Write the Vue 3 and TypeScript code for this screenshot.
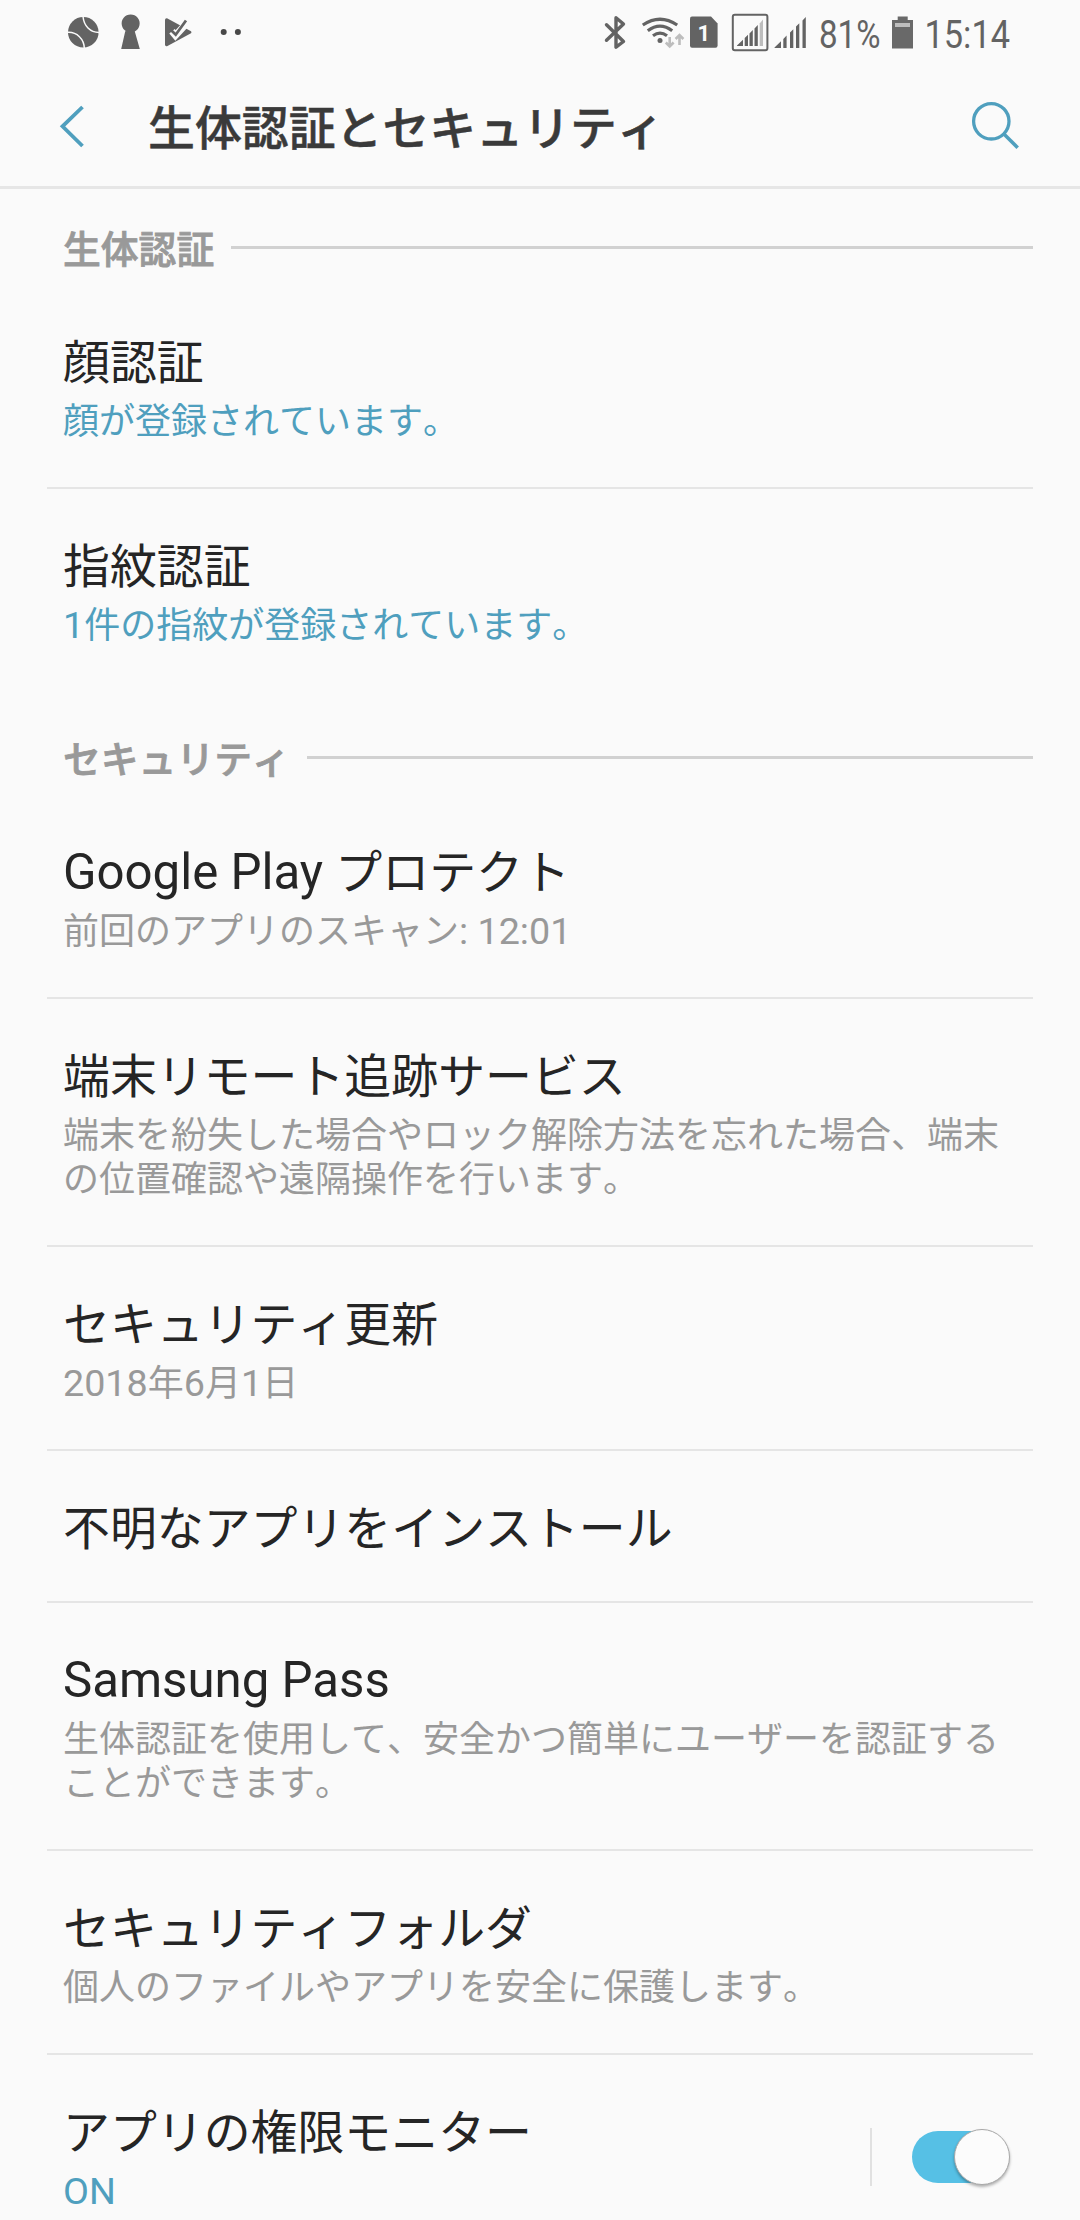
<script setup lang="ts">
interface Item {
  title: string
  summary?: string
  active?: boolean
  toggle?: boolean
}
interface Section {
  label: string
  items: Item[]
}
interface Run {
  text: string
  latin: boolean
}

const heading = '生体認証とセキュリティ'

const sections: Section[] = [
  {
    label: '生体認証',
    items: [
      { title: '顔認証', summary: '顔が登録されています。', active: true },
      { title: '指紋認証', summary: '1件の指紋が登録されています。', active: true },
    ],
  },
  {
    label: 'セキュリティ',
    items: [
      { title: 'Google Play プロテクト', summary: '前回のアプリのスキャン: 12:01' },
      {
        title: '端末リモート追跡サービス',
        summary: '端末を紛失した場合やロック解除方法を忘れた場合、端末の位置確認や遠隔操作を行います。',
      },
      { title: 'セキュリティ更新', summary: '2018年6月1日' },
      { title: '不明なアプリをインストール' },
      {
        title: 'Samsung Pass',
        summary: '生体認証を使用して、安全かつ簡単にユーザーを認証することができます。',
      },
      { title: 'セキュリティフォルダ', summary: '個人のファイルやアプリを安全に保護します。' },
      { title: 'アプリの権限モニター', summary: 'ON', active: true, toggle: true },
    ],
  },
]

// Latin and Japanese runs are set at different sizes on a shared baseline.
function runs(text: string): Run[] {
  return (text.match(/[\x20-\x7e]+|[^\x20-\x7e]+/g) ?? []).map((part) => ({
    text: part,
    latin: /^[\x20-\x7e]/.test(part),
  }))
}
</script>

<template>
  <div class="screen">
    <div class="status">
      <svg class="notifications" viewBox="60 0 200 64" width="200" height="64">
        <circle cx="83.3" cy="32.3" r="15.3" fill="#636363" />
        <path d="M83 16.5C84 26 90 32.5 99 32.5M68 32.3C77 32 84 39 84.3 48" fill="none" stroke="#fafafa" stroke-width="1.5" />
        <path d="M126.5 31.4A9 9 0 1 1 134.8 31.4L139.8 49H121.2L125.3 31Z" fill="#636363" />
        <path d="M167 18.2L191 31.3Q192 32.3 191 33.3L167.5 46Q165 46.8 165 44.5V20Q165 18 167 18.2Z" fill="#636363" />
        <path d="M172 31.2L175.5 35.5L187.8 22.2" fill="none" stroke="#fafafa" stroke-width="7" />
        <path d="M171.2 30.3L175.7 34.7L186 20.5" fill="none" stroke="#636363" stroke-width="2.8" />
        <circle cx="223.7" cy="32" r="3" fill="#484848" />
        <circle cx="237.9" cy="32" r="3" fill="#484848" />
      </svg>
      <svg class="indicators" viewBox="600 0 440 64" width="440" height="64">
        <path d="M606.5 24.8L623.5 41.5L616 47.2V17.7L623.5 24L606.5 40.3" fill="none" stroke="#636363" stroke-width="3.4" stroke-linejoin="round" stroke-linecap="round" />
        <g fill="none" stroke="#636363" stroke-width="3.2">
          <path d="M642.8 25Q660 13.5 677.2 25" />
          <path d="M647.8 30.8Q660 21.5 672.2 30.8" />
          <path d="M653 35.8Q660 30.5 667 35.8" />
        </g>
        <circle cx="660" cy="40.4" r="2.5" fill="#636363" />
        <path d="M669.7 37V46M665.8 42.5L669.7 46.5L673.6 42.5M679.5 45V35.5M675.6 39L679.5 35L683.4 39" fill="none" stroke="#bdbdbd" stroke-width="2.6" />
        <path d="M692 16.5H711L717.6 23.5V45.5Q717.6 47.7 715.5 47.7H692Q690 47.7 690 45.5V18.5Q690 16.5 692 16.5Z" fill="#636363" />
        <text x="703.7" y="40.7" text-anchor="middle" font-size="22" font-weight="700" fill="#fafafa">1</text>
        <rect x="732.8" y="14.8" width="34.6" height="35.4" rx="2" fill="none" stroke="#636363" stroke-width="2" />
        <path d="M737 46V45.5L743 39.8V46ZM744.7 46V38L748 34.8V46ZM749.5 46V33.5L752.8 30V46ZM754.5 46V28.5L757.8 25V46Z" fill="#636363" />
        <path d="M759.7 46V23.5L763 19.5V46Z" fill="#bdbdbd" />
        <path d="M774.5 48V47.5L781 41.2V48ZM783.3 48V38.9L786.6 35.6V48ZM790 48V32.5L793.3 29.2V48ZM796 48V26.5L799.3 23.2V48ZM802.5 48V20.5L805.8 17V48Z" fill="#636363" />
        <text x="819" y="48" font-size="39.4" fill="#636363" textLength="61.5" lengthAdjust="spacingAndGlyphs">81%</text>
        <path d="M892 20H897.7V16.5H907.7V20H913V48.5H892Z" fill="#696969" />
        <rect x="895" y="23" width="15" height="4" fill="#bdbdbd" />
        <text x="924.5" y="48" font-size="39.4" fill="#636363" textLength="85.5" lengthAdjust="spacingAndGlyphs">15:14</text>
      </svg>
    </div>

    <header class="bar">
      <svg class="back" viewBox="56 100 32 52" width="32" height="52">
        <path d="M82.5 107L62.5 126.3L82.5 146" fill="none" stroke="#4f9fbe" stroke-width="3.8" />
      </svg>
      <h1>{{ heading }}</h1>
      <svg class="search" viewBox="968 98 56 56" width="56" height="56">
        <circle cx="991.3" cy="121.3" r="17.7" fill="none" stroke="#4f9fbe" stroke-width="3.3" />
        <path d="M1003.7 133.7L1017.7 147.7" stroke="#4f9fbe" stroke-width="3.5" />
      </svg>
    </header>

    <section v-for="section in sections" :key="section.label">
      <div class="label">
        <h2>{{ section.label }}</h2>
        <span class="rule"></span>
      </div>
      <ul>
        <li v-for="item in section.items" :key="item.title">
          <div class="copy">
            <p class="title">
              <span v-for="(run, i) in runs(item.title)" :key="i" :class="{ latin: run.latin }">{{ run.text }}</span>
            </p>
            <p v-if="item.summary" class="summary" :class="{ active: item.active }">
              <span v-for="(run, i) in runs(item.summary)" :key="i" :class="{ latin: run.latin }">{{ run.text }}</span>
            </p>
          </div>
          <div v-if="item.toggle" class="control">
            <span class="switch"><span class="thumb"></span></span>
          </div>
        </li>
      </ul>
    </section>
  </div>
</template>

<style>
body {
  margin: 0;
  background: #fafafa;
}
</style>

<style scoped>
.screen {
  width: 1080px;
  height: 2220px;
  overflow: hidden;
  background: #fafafa;
  font-family: 'Noto Sans CJK JP', Roboto, sans-serif;
  font-kerning: none;
}
.status {
  display: flex;
  justify-content: space-between;
  height: 64px;
  padding: 0 40px 0 60px;
  font-family: Roboto, sans-serif;
}
.bar {
  display: flex;
  align-items: center;
  height: 122px;
  padding: 0 56px;
  border-bottom: 3px solid #e6e6e6;
}
.back,
.search {
  margin-top: 2px;
}
.bar h1 {
  flex: 1;
  margin: 0 0 0 60px;
  font-size: 46.9px;
  font-weight: 500;
  line-height: 60px;
  color: #3a3a3a;
  -webkit-text-stroke: 0.5px #3a3a3a;
}
.label {
  display: flex;
  align-items: center;
  height: 60px;
  padding: 28px 47px 8px 63px;
}
section + section .label {
  padding-top: 34px;
}
.label h2 {
  margin: -1px 17px 0 0;
  font-size: 37.8px;
  font-weight: 500;
  line-height: 60px;
  color: #999;
  -webkit-text-stroke: 0.8px #999;
}
.rule {
  flex: 1;
  height: 3px;
  background: #d1d1d1;
}
ul {
  margin: 0;
  padding: 0 47px;
  list-style: none;
}
li {
  display: flex;
  box-sizing: border-box;
  padding: 45px 16px 47px;
  border-bottom: 2px solid #e5e5e5;
}
li:last-child {
  border-bottom-color: transparent;
}
.copy {
  flex: 1;
}
p {
  margin: 0;
}
.title {
  font-size: 46.9px;
  line-height: 58px;
  color: #252525;
}
.summary {
  margin-top: 8px;
  font-size: 36px;
  line-height: 44px;
  color: #999;
}
.summary.active {
  color: #4f9fbe;
}
.latin {
  font-family: Roboto, sans-serif;
  font-kerning: auto;
  line-height: 0;
}
.title .latin {
  font-size: 49.2px;
}
.summary .latin {
  font-size: 37.7px;
}
.control {
  display: flex;
  align-items: center;
  align-self: center;
  height: 58px;
  margin: 3px 7px 0 0;
  padding-left: 40px;
  border-left: 2px solid #e1e1e1;
}
.switch {
  display: flex;
  align-items: center;
  justify-content: flex-end;
  width: 98px;
  height: 52px;
  border-radius: 26px;
  background: linear-gradient(90deg, #56c0e5 80px, transparent 80px);
}
.thumb {
  box-sizing: border-box;
  width: 56px;
  height: 56px;
  border: 1px solid #a8a8a8;
  border-radius: 50%;
  background: #fcfcfc;
  box-shadow: 0 2px 3px rgba(0, 0, 0, 0.3);
}
</style>
